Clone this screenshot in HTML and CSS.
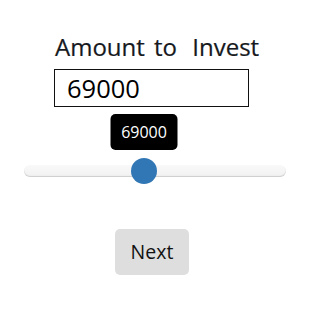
FILE: index.html
```html
<!DOCTYPE html>
<html>
<head>
<meta charset="utf-8">
<link rel="stylesheet" href="styles.css">
</head>
<body>
<div class="page">
  <div class="title">Amount to <span class="title-last">Invest</span></div>
  <div class="input">69000</div>
  <div class="slider">
    <div class="tooltip" style="left: 120px;">69000</div>
    <div class="track">
      <div class="thumb" style="left: 107px;"></div>
    </div>
  </div>
  <div class="button">Next</div>
</div>
</body>
</html>
```
FILE: styles.css
```css
html, body {
  margin: 0;
  padding: 0;
  background: #fff;
}
.page {
  display: flex;
  flex-direction: column;
  align-items: flex-start;
  font-family: "Open Sans", "Noto Sans", sans-serif;
  color: #1a1a1a;
  padding-top: 32px;
}
.title {
  margin-left: 55px;
  font-size: 24px;
  font-weight: 500;
  line-height: 30px;
  color: #16191d;
  word-spacing: 3px;
  -webkit-text-stroke: 0.2px #16191d;
}
.title-last {
  margin-left: 6px;
}
.input {
  margin-left: 54px;
  margin-top: 7px;
  box-sizing: border-box;
  width: 195px;
  height: 38px;
  border: 1px solid #111;
  padding-left: 12px;
  font-size: 25.5px;
  line-height: 36px;
  color: #000;
}
.slider {
  position: relative;
  margin-left: 24px;
  margin-top: 7px;
  width: 262px;
  padding-top: 51px;
}
.tooltip {
  position: absolute;
  top: 0;
  transform: translateX(-50%);
  background: #000;
  color: #fff;
  border-radius: 5px;
  width: 67px;
  height: 36px;
  box-sizing: border-box;
  text-align: center;
  font-size: 16px;
  line-height: 36px;
}
.track {
  position: relative;
  height: 12px;
  border-radius: 6px;
  background: linear-gradient(#f9f9f9, #f1f1f1);
  box-shadow: inset 0 -1px 1px rgba(0,0,0,0.15);
}
.thumb {
  position: absolute;
  top: -7px;
  width: 26px;
  height: 26px;
  border-radius: 50%;
  background: #3277b5;
}
.button {
  margin-left: 115px;
  margin-top: 52px;
  width: 74px;
  height: 46px;
  background: #dedede;
  border-radius: 5px;
  text-align: center;
  font-size: 19.5px;
  line-height: 46px;
  color: #111;
}
```
